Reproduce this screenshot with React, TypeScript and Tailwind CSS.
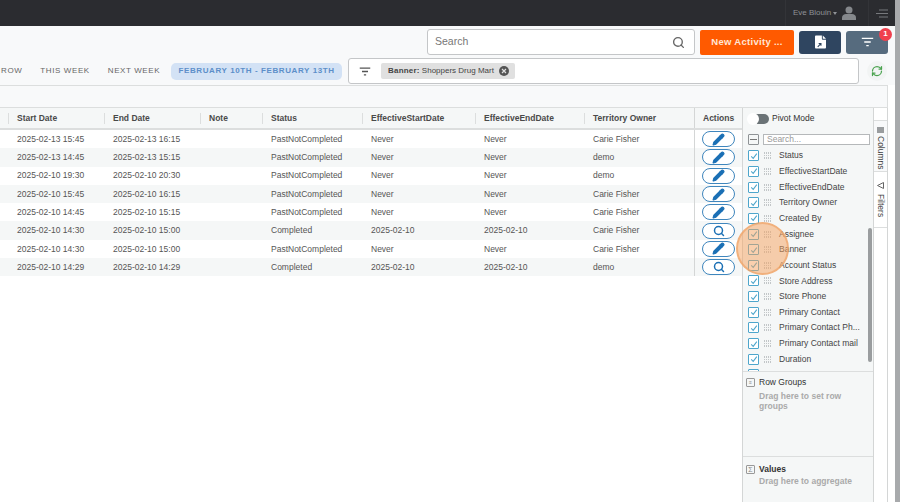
import React from 'react';
import { Search, Pencil, RefreshCw } from 'lucide-react';

const rows = [
  { start: '2025-02-13 15:45', end: '2025-02-13 16:15', status: 'PastNotCompleted', effStart: 'Never', effEnd: 'Never', owner: 'Carie Fisher', view: false },
  { start: '2025-02-13 14:45', end: '2025-02-13 15:15', status: 'PastNotCompleted', effStart: 'Never', effEnd: 'Never', owner: 'demo', view: false },
  { start: '2025-02-10 19:30', end: '2025-02-10 20:30', status: 'PastNotCompleted', effStart: 'Never', effEnd: 'Never', owner: 'demo', view: false },
  { start: '2025-02-10 15:45', end: '2025-02-10 16:15', status: 'PastNotCompleted', effStart: 'Never', effEnd: 'Never', owner: 'Carie Fisher', view: false },
  { start: '2025-02-10 14:45', end: '2025-02-10 15:15', status: 'PastNotCompleted', effStart: 'Never', effEnd: 'Never', owner: 'Carie Fisher', view: false },
  { start: '2025-02-10 14:30', end: '2025-02-10 15:00', status: 'Completed', effStart: '2025-02-10', effEnd: '2025-02-10', owner: 'Carie Fisher', view: true },
  { start: '2025-02-10 14:30', end: '2025-02-10 15:00', status: 'PastNotCompleted', effStart: 'Never', effEnd: 'Never', owner: 'Carie Fisher', view: false },
  { start: '2025-02-10 14:29', end: '2025-02-10 14:29', status: 'Completed', effStart: '2025-02-10', effEnd: '2025-02-10', owner: 'demo', view: true },
];

const columns = [
  'Status', 'EffectiveStartDate', 'EffectiveEndDate', 'Territory Owner', 'Created By', 'Assignee', 'Banner',
  'Account Status', 'Store Address', 'Store Phone', 'Primary Contact', 'Primary Contact Ph...', 'Primary Contact mail', 'Duration', '',
];

const headers = [
  { label: 'Start Date', w: 'w-[96px]' },
  { label: 'End Date', w: 'w-[96px]' },
  { label: 'Note', w: 'w-[62px]' },
  { label: 'Status', w: 'w-[100px]' },
  { label: 'EffectiveStartDate', w: 'w-[113px]' },
  { label: 'EffectiveEndDate', w: 'w-[109px]' },
  { label: 'Territory Owner', w: 'w-[110px]' },
];

const FilterLines = ({ className }: { className: string }) => (
  <svg viewBox="0 0 16 12" className={className} fill="none" stroke="currentColor" strokeWidth="1.7">
    <path d="M1 1.5h14M4 6h8M6.500 10.500h3" />
  </svg>
);

const Grip = () => (
  <svg viewBox="0 0 8 7" className="w-2 h-[7px] shrink-0 text-[#c2c6c8]" fill="currentColor">
    <path d="M0 0h1v7H0zM2 0h1v7H2zM4 0h1v7H4zM6 0h1v7H6z" />
    <path d="M0 2h8v1H0zM0 4h8v1H0z" fill="#f5f7f7" />
  </svg>
);

const Check = () => (
  <div className="w-[11px] h-[11px] shrink-0 border border-[#4ea6cc] rounded-[1px] bg-white flex items-center justify-center">
    <svg viewBox="0 0 10 10" className="w-[8px] h-[8px] text-[#4ea6cc]" fill="none" stroke="currentColor" strokeWidth="1.3">
      <path d="M1.500 5.500 4 8l4.500-6" />
    </svg>
  </div>
);

const ActionButton = ({ view }: { view: boolean }) => (
  <div className="w-[33px] h-[16px] rounded-full border border-[#3f86bd] bg-white flex items-center justify-center">
    {view ? (
      <Search className="w-[12px] h-[12px] text-[#1b70b5]" strokeWidth={3} />
    ) : (
      <Pencil className="w-[13px] h-[13px] text-[#1b70b5]" fill="#1b70b5" strokeWidth={2} />
    )}
  </div>
);

export default function App() {
  return (
    <div className="relative w-[900px] h-[502px] overflow-hidden bg-white font-['Liberation_Sans',Arial,sans-serif] text-[#555]">
      <div className="flex h-full">
        <div className="w-[895px] shrink-0 flex flex-col h-full">
          {/* top bar */}
          <div className="h-[26px] shrink-0 bg-[#2b2c30] flex items-center justify-end">
            <div className="h-full w-[83px] flex items-center border-l border-[#333438] pl-[7px]">
              <span className="text-[8px] text-[#8f9296] whitespace-nowrap">Eve Blouin</span>
              <span className="ml-[2px] border-x-[2.500px] border-t-[3px] border-x-transparent border-t-[#8f9296]" />
              <svg viewBox="0 0 14 14" className="ml-[5px] w-[14px] h-[14px] text-[#85888c]" fill="currentColor">
                <circle cx="7" cy="4" r="3.500" />
                <path d="M0 14v-2.500C0 9.500 2 8 4 8h6c2 0 4 1.500 4 3.500V14z" />
              </svg>
            </div>
            <div className="h-full w-[27px] flex items-center justify-center border-l border-[#333438]">
              <svg viewBox="0 0 12 9" className="w-[12px] h-[9px] text-[#77797d]" fill="none" stroke="currentColor" strokeWidth="1">
                <path d="M3 1h9M0 4.500h12M3 8h9" />
              </svg>
            </div>
          </div>

          {/* search and buttons */}
          <div className="h-[31px] shrink-0 bg-[#f8f9fa] flex items-center justify-end pr-[7px] pt-[1px]">
            <div className="w-[268px] h-[26px] bg-white border border-[#c4c6c8] rounded-[3px] flex items-center justify-between pl-[7px] pr-[9px]">
              <span className="text-[10.500px] text-[#777]">Search</span>
              <Search className="w-[13px] h-[13px] text-[#666]" strokeWidth={2.500} />
            </div>
            <div className="ml-[5px] w-[94px] h-[25px] bg-[#ff5a00] rounded-[2px] flex items-center justify-center text-[9.500px] font-bold tracking-[0.3px] text-[#ffe6d6]">
              New Activity ...
            </div>
            <div className="ml-[5px] w-[42px] h-[23px] bg-[#2f4560] rounded-[3px] flex items-center justify-center">
              <svg viewBox="0 0 12 14" className="w-[11px] h-[14px]">
                <path d="M1 0h6.500v3.500a1 1 0 0 0 1 1H12V13a1 1 0 0 1-1 1H1a1 1 0 0 1-1-1V1a1 1 0 0 1 1-1zM8.500 0 12 3.500H8.500z" fill="#fff" />
                <path d="M3 12.200l2.800-2.800M4 8.700h2.500v2.500" fill="none" stroke="#2f4560" strokeWidth="1.200" />
              </svg>
            </div>
            <div className="relative ml-[5px] w-[42px] h-[23px] bg-[#566b7e] rounded-[3px] flex items-center justify-center">
              <FilterLines className="w-[13px] h-[10px] text-white" />
              <span className="absolute -top-[3px] -right-[4px] w-[13px] h-[13px] rounded-full bg-[#f0404e] text-white text-[8px] font-bold flex items-center justify-center">1</span>
            </div>
          </div>

          {/* date tabs and filter chips */}
          <div className="h-[28px] shrink-0 bg-[#f8f9fa] flex items-center">
            <div className="w-[342px] shrink-0 flex items-center text-[8px] tracking-[0.6px] text-[#666] whitespace-nowrap">
              <span className="ml-[1px]">ROW</span>
              <span className="ml-[18px]">THIS WEEK</span>
              <span className="ml-[18px]">NEXT WEEK</span>
              <span className="ml-[11px] h-[17px] w-[171px] rounded-[5px] bg-[#d3e2f5] text-[#5d8fc9] font-bold flex items-center justify-center">
                FEBRUARY 10TH - FEBRUARY 13TH
              </span>
            </div>
            <div className="ml-[6px] w-[511px] h-[26px] shrink-0 bg-white border border-[#c4c6c8] rounded-[3px] flex items-center pl-[10px]">
              <FilterLines className="w-[12px] h-[9px] text-[#555]" />
              <div className="ml-[10px] h-[16px] w-[134px] bg-[#e0e0e0] rounded-[2px] flex items-center justify-between pl-[7px] pr-[6px] text-[8px] text-[#444] whitespace-nowrap">
                <span><b className="tracking-[0.2px]">Banner:</b> Shoppers Drug Mart</span>
                <svg viewBox="0 0 10 10" className="w-[10px] h-[10px] shrink-0">
                  <circle cx="5" cy="5" r="5" fill="#555" />
                  <path d="M3 3l4 4M7 3l-4 4" stroke="#e0e0e0" strokeWidth="1.200" />
                </svg>
              </div>
            </div>
            <div className="w-[36px] flex items-center justify-center">
              <div className="w-[20px] h-[20px] rounded-full bg-[#f2f4f4] flex items-center justify-center">
                <RefreshCw className="w-[12px] h-[12px] text-[#4aa34f]" strokeWidth={2.500} />
              </div>
            </div>
          </div>

          {/* empty toolbar */}
          <div className="h-[23px] shrink-0 mr-[7px] bg-[#f8f9fa] border-y border-r border-[#dcdede]" />

          {/* grid and side panel */}
          <div className="flex-1 min-h-0 flex mr-[7px] border-r border-[#d4d6d6]">
            <div className="w-[743px] shrink-0 flex flex-col border-r border-[#d4d6d6]">
              <div className="h-[22px] shrink-0 flex items-center bg-[#f5f7f7] border-b-[2px] border-[#dcdede] text-[8.500px] font-bold text-[#4a4a4a]">
                <div className="w-[8px] shrink-0" />
                {headers.map((h) => (
                  <div key={h.label} className={`${h.w} shrink-0 border-l border-[#dcdede] pl-[8px] h-[11px] leading-[11px] whitespace-nowrap`}>
                    {h.label}
                  </div>
                ))}
                <div className="flex-1 h-full border-l border-[#d4d6d6] pl-[8px] leading-[20px]">Actions</div>
              </div>
              {rows.map((r, i) => (
                <div key={i} className={`h-[18.300px] shrink-0 flex items-center text-[8.500px] text-[#555] whitespace-nowrap ${i % 2 === 1 ? 'bg-[#f5f7f7]' : 'bg-white'}`}>
                  <div className="w-[105px] shrink-0 pl-[17px]">{r.start}</div>
                  <div className="w-[96px] shrink-0 pl-[8px]">{r.end}</div>
                  <div className="w-[62px] shrink-0" />
                  <div className="w-[100px] shrink-0 pl-[8px]">{r.status}</div>
                  <div className="w-[113px] shrink-0 pl-[8px]">{r.effStart}</div>
                  <div className="w-[109px] shrink-0 pl-[8px]">{r.effEnd}</div>
                  <div className="w-[109px] shrink-0 pl-[8px]">{r.owner}</div>
                  <div className="flex-1 h-full border-l border-[#d4d6d6] pl-[7px] flex items-center">
                    <ActionButton view={r.view} />
                  </div>
                </div>
              ))}
            </div>

            {/* columns panel */}
            <div className="w-[131px] shrink-0 flex flex-col bg-[#f5f7f7] border-r border-[#d4d6d6] text-[8.500px] text-[#444]">
              <div className="h-[22px] shrink-0 flex items-center pl-[5px] pb-[1px]">
                <div className="relative w-[21px] h-[10px] rounded-full bg-[#6b7376]">
                  <span className="absolute -left-[1px] -top-[1px] w-[12px] h-[12px] rounded-full bg-white" />
                </div>
                <span className="ml-[3px] text-[#333]">Pivot Mode</span>
              </div>
              <div className="h-[18px] shrink-0 flex items-center pl-[5px] pr-[3px]">
                <div className="w-[11px] h-[11px] border border-[#8f9396] rounded-[1px] flex items-center justify-center">
                  <span className="w-[7px] h-px bg-[#777]" />
                </div>
                <div className="ml-[4px] flex-1 h-[11px] bg-white border border-[#b5b8ba] pl-[3px] text-[8.500px] leading-[9px] text-[#999]">Search...</div>
              </div>
              <div className="h-[223px] shrink-0 flex overflow-hidden">
                <div className="flex-1 flex flex-col min-w-0">
                  {columns.map((c, i) => (
                    <div key={i} className="h-[15.650px] shrink-0 flex items-center pl-[5px] whitespace-nowrap">
                      <Check />
                      {c && <span className="ml-[5px]"><Grip /></span>}
                      {c && <span className="ml-[7px]">{c}</span>}
                    </div>
                  ))}
                </div>
                <div className="w-[5px] shrink-0 flex flex-col pt-[80px]">
                  <div className="h-[134px] w-[4px] rounded-full bg-[#9a9d9f]" />
                </div>
              </div>
              <div className="h-[85px] shrink-0 border-t border-[#dcdede] px-[3px] pt-[4px]">
                <div className="flex items-center">
                  <div className="w-[9px] h-[9px] border border-[#999] rounded-[1px] text-[5px] leading-[7px] text-center text-[#888]">≡</div>
                  <span className="ml-[4px] text-[#333]">Row Groups</span>
                </div>
                <div className="ml-[13px] mt-[2px] font-bold text-[#aaa] leading-[10px]">Drag here to set row groups</div>
              </div>
              <div className="flex-1 border-t border-[#dcdede] px-[3px] pt-[6px]">
                <div className="flex items-center">
                  <div className="w-[9px] h-[9px] border border-[#999] rounded-[1px] text-[7px] leading-[7px] text-center text-[#888]">Σ</div>
                  <span className="ml-[4px] font-bold text-[#333]">Values</span>
                </div>
                <div className="ml-[13px] font-bold text-[#aaa] leading-[10px] whitespace-nowrap">Drag here to aggregate</div>
              </div>
            </div>

            {/* side tabs */}
            <div className="flex-1 pt-[12px] flex flex-col bg-white text-[8.500px] text-[#444]">
              <div className="h-[52px] flex flex-col items-center border-y border-[#dcdede] bg-[#f8f9fa] pt-[6px]">
                <div className="w-[7px] h-[6px] bg-[#9a9d9f]" />
                <span className="mt-[3px] [writing-mode:vertical-rl]">Columns</span>
              </div>
              <div className="h-[56px] flex flex-col items-center border-b border-[#dcdede] pt-[10px]">
                <svg viewBox="0 0 7 7" className="w-[7px] h-[7px] text-[#666]" fill="none" stroke="currentColor" strokeWidth="1">
                  <path d="M6.500 .5v6L.5 3.500z" />
                </svg>
                <span className="mt-[5px] [writing-mode:vertical-rl]">Filters</span>
              </div>
            </div>
          </div>
        </div>
        <div className="flex-1 bg-[#a8aaac]" />
      </div>

      {/* click highlight over the column list */}
      <div className="absolute left-[736px] top-[222px] w-[53px] h-[53px] rounded-full bg-[#f5a25e]/50 border-2 border-[#f0a468]/70" />
    </div>
  );
}
